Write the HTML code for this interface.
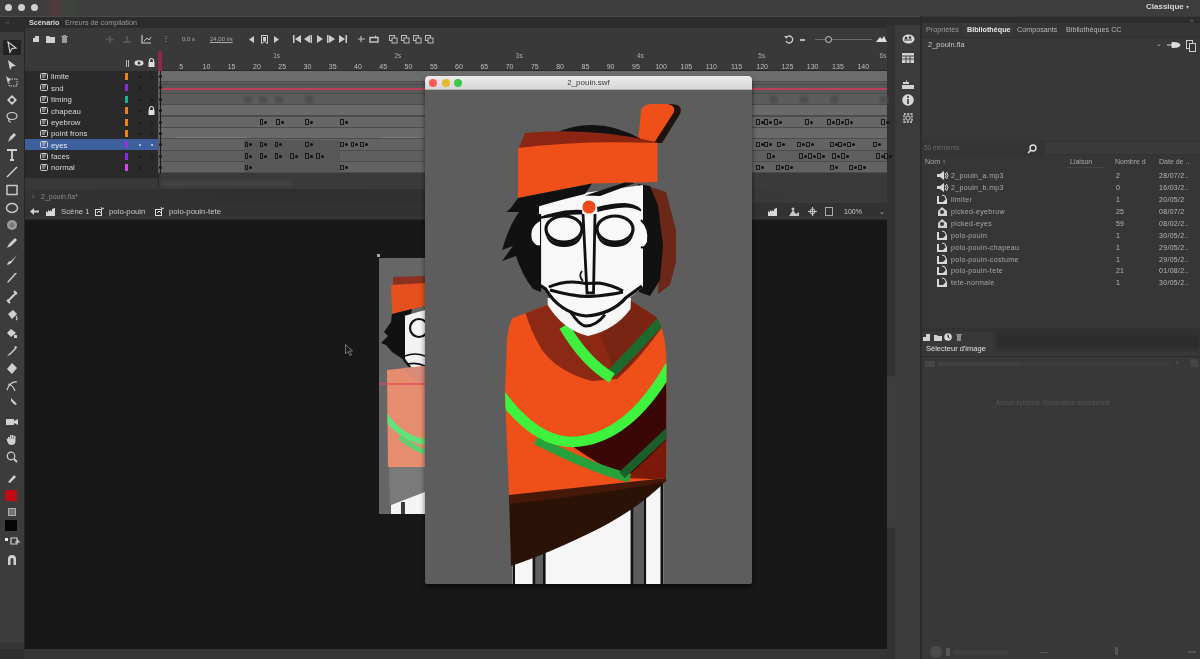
<!DOCTYPE html>
<html><head><meta charset="utf-8">
<style>
*{margin:0;padding:0;box-sizing:border-box}
html,body{width:1200px;height:659px;overflow:hidden;background:#323232;font-family:"Liberation Sans",sans-serif;color:#bbb}
.a{position:absolute}
.t{position:absolute;white-space:nowrap;line-height:1;-webkit-font-smoothing:antialiased}
svg{position:absolute;overflow:visible}
</style></head><body><div id="wrap" style="position:absolute;left:0;top:0;width:1200px;height:659px;overflow:hidden;filter:blur(0.35px)">
<div class="a" style="left:0px;top:0px;width:1200px;height:16px;background:#3d3d3d;"></div>
<div class="a" style="left:0px;top:16px;width:1200px;height:1px;background:#4a4a4a;"></div>
<div class="a" style="left:0px;top:17px;width:1200px;height:642px;background:#2c2c2c;"></div>
<div class="a" style="left:4.5px;top:3.5px;width:7px;height:7px;border-radius:50%;background:#cfcfcf"></div>
<div class="a" style="left:17.5px;top:3.5px;width:7px;height:7px;border-radius:50%;background:#cfcfcf"></div>
<div class="a" style="left:30.5px;top:3.5px;width:7px;height:7px;border-radius:50%;background:#cfcfcf"></div>
<div class="a" style="left:49px;top:0px;width:13px;height:16px;background:#553a40;filter:blur(1.5px);opacity:.9"></div>
<div class="a" style="left:62px;top:0px;width:14px;height:16px;background:#3e463f;filter:blur(1.5px);opacity:.8"></div>
<div class="t" style="left:1146px;top:3px;font-size:8px;color:#d8d8d8;font-weight:bold">Classique</div>
<div class="t" style="left:1186px;top:4px;font-size:6px;color:#bbb;">&#9662;</div>
<div class="t" style="left:29px;top:19px;font-size:7.2px;color:#d6d6d6;font-weight:bold">Scénario</div>
<div class="t" style="left:65px;top:19px;font-size:7.2px;color:#9a9a9a;">Erreurs de compilation</div>
<div class="t" style="left:5px;top:19px;font-size:6px;color:#777;">&#8249;&#8249;</div>
<div class="a" style="left:0px;top:32px;width:24px;height:611px;background:#3c3c3c;"></div>
<div class="a" style="left:0px;top:643px;width:24px;height:16px;background:#363636;"></div>
<div class="a" style="left:24px;top:28px;width:1px;height:631px;background:#262626;"></div>
<div class="a" style="left:25px;top:28px;width:862px;height:43px;background:#393939;"></div>
<div class="a" style="left:25px;top:71px;width:133px;height:107px;background:#2a2a2a;"></div>
<div class="a" style="left:158px;top:71px;width:729px;height:102px;background:#5c5c5c;"></div>
<div class="a" style="left:25px;top:173px;width:862px;height:16px;background:#3a3a3a;"></div>
<div class="a" style="left:25px;top:178px;width:133px;height:11px;background:#383838;"></div>
<div class="a" style="left:25px;top:173px;width:133px;height:5px;background:#2a2a2a;"></div>
<div class="a" style="left:158px;top:173px;width:1px;height:16px;background:#2a2a2a;"></div>
<div class="a" style="left:162px;top:180px;width:130px;height:7px;background:#424242;border-radius:3px;filter:blur(1px)"></div>
<div class="a" style="left:25px;top:189px;width:862px;height:14px;background:linear-gradient(90deg,#333 0%,#2f2f2f 35%,#333 70%,#3a3a3a 90%);"></div>
<div class="a" style="left:25px;top:203px;width:862px;height:15px;background:#323232;"></div>
<div class="a" style="left:25px;top:217px;width:862px;height:1px;background:#3c3c3c;"></div>
<div class="a" style="left:25px;top:220px;width:862px;height:429px;background:#181818;"></div>
<div class="a" style="left:0px;top:649px;width:888px;height:10px;background:#343434;"></div>
<div class="a" style="left:0px;top:649px;width:24px;height:10px;background:#2e2e2e;"></div>
<div class="a" style="left:887px;top:17px;width:33px;height:642px;background:#3b3b3b;"></div>
<div class="a" style="left:887px;top:17px;width:8px;height:642px;background:#323232;"></div>
<div class="a" style="left:887px;top:17px;width:33px;height:8px;background:#2e2e2e;"></div>
<div class="a" style="left:920px;top:16px;width:2px;height:643px;background:#2b2b2b;"></div>
<div class="a" style="left:922px;top:16px;width:278px;height:643px;background:#383838;"></div>
<svg style="left:32px;top:35px" width="9" height="8" viewBox="0 0 9 8"><rect x="1" y="1" width="6" height="6" fill="#d0d0d0"/><rect x="0" y="0" width="3" height="3" fill="#393939"/></svg>
<svg style="left:46px;top:35px" width="9" height="8" viewBox="0 0 9 8"><path d="M0 1h3l1 1h5v6H0z" fill="#cfcfcf"/></svg>
<svg style="left:61px;top:35px" width="7" height="8" viewBox="0 0 7 8"><path d="M1 2h5v6H1z M0 1h7v1H0z M2 0h3v1H2z" fill="#9a9a9a"/></svg>
<svg style="left:106px;top:36px" width="8" height="7" viewBox="0 0 8 7"><path d="M4 0v7M0 3.5h8" stroke="#555" stroke-width="2"/></svg>
<svg style="left:123px;top:36px" width="8" height="7" viewBox="0 0 8 7"><path d="M4 0v6M0 6h8" stroke="#555" stroke-width="2"/></svg>
<svg style="left:141px;top:35px" width="10" height="9" viewBox="0 0 10 9"><path d="M1 0v8h9" stroke="#c8c8c8" stroke-width="1.2" fill="none"/><path d="M3 6l3-3 2 2 2-3" stroke="#c8c8c8" stroke-width="1" fill="none"/></svg>
<div class="a" style="left:126px;top:60px;width:1px;height:7px;background:#bbb;"></div>
<div class="a" style="left:128px;top:60px;width:1px;height:7px;background:#bbb;"></div>
<svg style="left:134px;top:60px" width="10" height="6" viewBox="0 0 10 6"><ellipse cx="5" cy="3" rx="4.5" ry="2.8" fill="#ddd"/><circle cx="5" cy="3" r="1.5" fill="#393939"/></svg>
<svg style="left:148px;top:58px" width="7" height="9" viewBox="0 0 7 9"><path d="M1.5 4V2.5a2 2 0 0 1 4 0V4" stroke="#ddd" stroke-width="1.2" fill="none"/><rect x="0.5" y="4" width="6" height="5" fill="#ddd"/></svg>
<div class="t" style="left:162px;top:35px;font-size:8px;color:#aaa;">&#8942;</div>
<div class="t" style="left:182px;top:36px;font-size:6px;color:#aaa;">0,0 s</div>
<div class="t" style="left:210px;top:36px;font-size:6px;color:#aaa;text-decoration:underline">24,00 i/s</div>
<svg style="left:249px;top:36px" width="5" height="7" viewBox="0 0 5 7"><path d="M5 0L0 3.5 5 7z" fill="#ccc"/></svg>
<svg style="left:261px;top:35px" width="7" height="10" viewBox="0 0 7 10"><path d="M0.5 0.5h6v8l-3-2-3 2z" stroke="#ccc" fill="none"/><rect x="2" y="2" width="3" height="4" fill="#ccc"/></svg>
<svg style="left:274px;top:36px" width="5" height="7" viewBox="0 0 5 7"><path d="M0 0L5 3.5 0 7z" fill="#ccc"/></svg>
<svg style="left:293px;top:35px" width="8" height="8" viewBox="0 0 8 8"><path d="M0 0h1.5v8H0z M8 0L2 4 8 8z" fill="#ccc"/></svg>
<svg style="left:304px;top:35px" width="8" height="8" viewBox="0 0 8 8"><path d="M6 0L0 4 6 8z M6.5 0H8v8H6.5z" fill="#ccc"/></svg>
<svg style="left:317px;top:35px" width="6" height="8" viewBox="0 0 6 8"><path d="M0 0L6 4 0 8z" fill="#ccc"/></svg>
<svg style="left:327px;top:35px" width="8" height="8" viewBox="0 0 8 8"><path d="M0 0h1.5v8H0z M2 0L8 4 2 8z" fill="#ccc"/></svg>
<svg style="left:339px;top:35px" width="8" height="8" viewBox="0 0 8 8"><path d="M0 0L6 4 0 8z M6.5 0H8v8H6.5z" fill="#ccc"/></svg>
<svg style="left:357px;top:35px" width="9" height="8" viewBox="0 0 9 8"><path d="M1 4h7M4 1v6" stroke="#bbb" stroke-width="1.2"/></svg>
<svg style="left:369px;top:35px" width="10" height="8" viewBox="0 0 10 8"><rect x="1" y="2.5" width="8" height="4.5" stroke="#ccc" stroke-width="1.4" fill="none"/><path d="M6 0l2 2.5-2 1z" fill="#ccc"/></svg>
<svg style="left:389px;top:35px" width="9" height="9" viewBox="0 0 9 9"><rect x="0.5" y="0.5" width="5" height="5" stroke="#bbb" fill="none"/><rect x="3" y="3" width="5" height="5" stroke="#bbb" fill="#393939"/></svg>
<svg style="left:401px;top:35px" width="9" height="9" viewBox="0 0 9 9"><rect x="0.5" y="0.5" width="5" height="5" stroke="#bbb" fill="none"/><rect x="3" y="3" width="5" height="5" stroke="#bbb" fill="#393939"/></svg>
<svg style="left:413px;top:35px" width="9" height="9" viewBox="0 0 9 9"><rect x="0.5" y="0.5" width="5" height="5" stroke="#bbb" fill="none"/><rect x="3" y="3" width="5" height="5" stroke="#bbb" fill="#393939"/></svg>
<svg style="left:425px;top:35px" width="9" height="9" viewBox="0 0 9 9"><rect x="0.5" y="0.5" width="5" height="5" stroke="#bbb" fill="none"/><rect x="3" y="3" width="5" height="5" stroke="#bbb" fill="#393939"/></svg>
<svg style="left:784px;top:35px" width="9" height="9" viewBox="0 0 9 9"><path d="M2 3a3.5 3.5 0 1 1 0 3" stroke="#ccc" stroke-width="1.3" fill="none"/><path d="M0 1l3 0 0 3z" fill="#ccc"/></svg>
<div class="a" style="left:800px;top:39px;width:5px;height:1.5px;background:#bbb;"></div>
<div class="a" style="left:815px;top:39px;width:57px;height:1px;background:#6a6a6a;"></div>
<div class="a" style="left:825px;top:36px;width:7px;height:7px;border:1.3px solid #ccc;border-radius:50%;background:#393939"></div>
<svg style="left:876px;top:36px" width="11" height="6" viewBox="0 0 11 6"><path d="M0 6L4 1 6 3 8 0 11 6z" fill="#ddd"/></svg>
<div class="a" style="left:158px;top:50px;width:729px;height:20px;background:#393939;"></div>
<div class="t" style="left:179.2px;top:62.5px;font-size:7px;color:#bdbdbd;">5</div>
<div class="t" style="left:202.5px;top:62.5px;font-size:7px;color:#bdbdbd;">10</div>
<div class="t" style="left:227.7px;top:62.5px;font-size:7px;color:#bdbdbd;">15</div>
<div class="t" style="left:253.0px;top:62.5px;font-size:7px;color:#bdbdbd;">20</div>
<div class="t" style="left:278.3px;top:62.5px;font-size:7px;color:#bdbdbd;">25</div>
<div class="t" style="left:303.5px;top:62.5px;font-size:7px;color:#bdbdbd;">30</div>
<div class="t" style="left:328.8px;top:62.5px;font-size:7px;color:#bdbdbd;">35</div>
<div class="t" style="left:354.1px;top:62.5px;font-size:7px;color:#bdbdbd;">40</div>
<div class="t" style="left:379.3px;top:62.5px;font-size:7px;color:#bdbdbd;">45</div>
<div class="t" style="left:404.6px;top:62.5px;font-size:7px;color:#bdbdbd;">50</div>
<div class="t" style="left:429.9px;top:62.5px;font-size:7px;color:#bdbdbd;">55</div>
<div class="t" style="left:455.1px;top:62.5px;font-size:7px;color:#bdbdbd;">60</div>
<div class="t" style="left:480.4px;top:62.5px;font-size:7px;color:#bdbdbd;">65</div>
<div class="t" style="left:505.7px;top:62.5px;font-size:7px;color:#bdbdbd;">70</div>
<div class="t" style="left:530.9px;top:62.5px;font-size:7px;color:#bdbdbd;">75</div>
<div class="t" style="left:556.2px;top:62.5px;font-size:7px;color:#bdbdbd;">80</div>
<div class="t" style="left:581.5px;top:62.5px;font-size:7px;color:#bdbdbd;">85</div>
<div class="t" style="left:606.7px;top:62.5px;font-size:7px;color:#bdbdbd;">90</div>
<div class="t" style="left:632.0px;top:62.5px;font-size:7px;color:#bdbdbd;">95</div>
<div class="t" style="left:655.2px;top:62.5px;font-size:7px;color:#bdbdbd;">100</div>
<div class="t" style="left:680.5px;top:62.5px;font-size:7px;color:#bdbdbd;">105</div>
<div class="t" style="left:705.8px;top:62.5px;font-size:7px;color:#bdbdbd;">110</div>
<div class="t" style="left:731.0px;top:62.5px;font-size:7px;color:#bdbdbd;">115</div>
<div class="t" style="left:756.3px;top:62.5px;font-size:7px;color:#bdbdbd;">120</div>
<div class="t" style="left:781.6px;top:62.5px;font-size:7px;color:#bdbdbd;">125</div>
<div class="t" style="left:806.8px;top:62.5px;font-size:7px;color:#bdbdbd;">130</div>
<div class="t" style="left:832.1px;top:62.5px;font-size:7px;color:#bdbdbd;">135</div>
<div class="t" style="left:857.4px;top:62.5px;font-size:7px;color:#bdbdbd;">140</div>
<div class="t" style="left:273.2px;top:52.5px;font-size:6.5px;color:#aaa;">1s</div>
<div class="t" style="left:394.5px;top:52.5px;font-size:6.5px;color:#aaa;">2s</div>
<div class="t" style="left:515.8px;top:52.5px;font-size:6.5px;color:#aaa;">3s</div>
<div class="t" style="left:637.0px;top:52.5px;font-size:6.5px;color:#aaa;">4s</div>
<div class="t" style="left:758.3px;top:52.5px;font-size:6.5px;color:#aaa;">5s</div>
<div class="t" style="left:879.6px;top:52.5px;font-size:6.5px;color:#aaa;">6s</div>
<div class="a" style="left:158px;top:70px;width:729px;height:1px;background:#2a2a2a;"></div>
<svg style="left:40px;top:73.0px" width="8" height="7" viewBox="0 0 8 7"><rect x="0.5" y="0.5" width="7" height="6" stroke="#cfcfcf" fill="none" rx="1"/><path d="M2 2h4M2 4h3" stroke="#cfcfcf"/></svg>
<div class="t" style="left:51px;top:73.3px;font-size:7.8px;color:#d8d8d8;">limite</div>
<div class="a" style="left:125px;top:73.0px;width:3px;height:7px;background:#f08020;"></div>
<div class="a" style="left:139px;top:76.0px;width:2px;height:2px;background:#151515;border-radius:50%"></div>
<div class="a" style="left:151px;top:76.0px;width:2px;height:2px;background:#151515;border-radius:50%"></div>
<svg style="left:40px;top:84.4px" width="8" height="7" viewBox="0 0 8 7"><rect x="0.5" y="0.5" width="7" height="6" stroke="#cfcfcf" fill="none" rx="1"/><path d="M2 2h4M2 4h3" stroke="#cfcfcf"/></svg>
<div class="t" style="left:51px;top:84.7px;font-size:7.8px;color:#d8d8d8;">snd</div>
<div class="a" style="left:125px;top:84.4px;width:3px;height:7px;background:#8a2be2;"></div>
<div class="a" style="left:139px;top:87.4px;width:2px;height:2px;background:#151515;border-radius:50%"></div>
<div class="a" style="left:151px;top:87.4px;width:2px;height:2px;background:#151515;border-radius:50%"></div>
<svg style="left:40px;top:95.8px" width="8" height="7" viewBox="0 0 8 7"><rect x="0.5" y="0.5" width="7" height="6" stroke="#cfcfcf" fill="none" rx="1"/><path d="M2 2h4M2 4h3" stroke="#cfcfcf"/></svg>
<div class="t" style="left:51px;top:96.1px;font-size:7.8px;color:#d8d8d8;">timing</div>
<div class="a" style="left:125px;top:95.8px;width:3px;height:7px;background:#20b090;"></div>
<div class="a" style="left:139px;top:98.8px;width:2px;height:2px;background:#151515;border-radius:50%"></div>
<div class="a" style="left:151px;top:98.8px;width:2px;height:2px;background:#151515;border-radius:50%"></div>
<svg style="left:40px;top:107.2px" width="8" height="7" viewBox="0 0 8 7"><rect x="0.5" y="0.5" width="7" height="6" stroke="#cfcfcf" fill="none" rx="1"/><path d="M2 2h4M2 4h3" stroke="#cfcfcf"/></svg>
<div class="t" style="left:51px;top:107.5px;font-size:7.8px;color:#d8d8d8;">chapeau</div>
<div class="a" style="left:125px;top:107.2px;width:3px;height:7px;background:#f08020;"></div>
<div class="a" style="left:139px;top:110.2px;width:2px;height:2px;background:#151515;border-radius:50%"></div>
<svg style="left:148px;top:106.2px" width="7" height="9" viewBox="0 0 7 9"><path d="M1.5 4V2.5a2 2 0 0 1 4 0V4" stroke="#ddd" stroke-width="1.2" fill="none"/><rect x="0.5" y="4" width="6" height="5" fill="#ddd"/></svg>
<svg style="left:40px;top:118.6px" width="8" height="7" viewBox="0 0 8 7"><rect x="0.5" y="0.5" width="7" height="6" stroke="#cfcfcf" fill="none" rx="1"/><path d="M2 2h4M2 4h3" stroke="#cfcfcf"/></svg>
<div class="t" style="left:51px;top:118.9px;font-size:7.8px;color:#d8d8d8;">eyebrow</div>
<div class="a" style="left:125px;top:118.6px;width:3px;height:7px;background:#f08020;"></div>
<div class="a" style="left:139px;top:121.6px;width:2px;height:2px;background:#151515;border-radius:50%"></div>
<div class="a" style="left:151px;top:121.6px;width:2px;height:2px;background:#151515;border-radius:50%"></div>
<svg style="left:40px;top:129.9px" width="8" height="7" viewBox="0 0 8 7"><rect x="0.5" y="0.5" width="7" height="6" stroke="#cfcfcf" fill="none" rx="1"/><path d="M2 2h4M2 4h3" stroke="#cfcfcf"/></svg>
<div class="t" style="left:51px;top:130.2px;font-size:7.8px;color:#d8d8d8;">point frons</div>
<div class="a" style="left:125px;top:129.9px;width:3px;height:7px;background:#f08020;"></div>
<div class="a" style="left:139px;top:132.9px;width:2px;height:2px;background:#151515;border-radius:50%"></div>
<div class="a" style="left:151px;top:132.9px;width:2px;height:2px;background:#151515;border-radius:50%"></div>
<div class="a" style="left:25px;top:139.3px;width:133px;height:11px;background:#3d5f9e;"></div>
<svg style="left:40px;top:141.3px" width="8" height="7" viewBox="0 0 8 7"><rect x="0.5" y="0.5" width="7" height="6" stroke="#cfcfcf" fill="none" rx="1"/><path d="M2 2h4M2 4h3" stroke="#cfcfcf"/></svg>
<div class="t" style="left:51px;top:141.6px;font-size:7.8px;color:#e8e8e8;">eyes</div>
<div class="a" style="left:125px;top:141.3px;width:3px;height:7px;background:#9a30e0;"></div>
<div class="a" style="left:139px;top:144.3px;width:2px;height:2px;background:#ddd;border-radius:50%"></div>
<div class="a" style="left:151px;top:144.3px;width:2px;height:2px;background:#ddd;border-radius:50%"></div>
<svg style="left:40px;top:152.7px" width="8" height="7" viewBox="0 0 8 7"><rect x="0.5" y="0.5" width="7" height="6" stroke="#cfcfcf" fill="none" rx="1"/><path d="M2 2h4M2 4h3" stroke="#cfcfcf"/></svg>
<div class="t" style="left:51px;top:153.0px;font-size:7.8px;color:#d8d8d8;">faces</div>
<div class="a" style="left:125px;top:152.7px;width:3px;height:7px;background:#8a2be2;"></div>
<div class="a" style="left:139px;top:155.7px;width:2px;height:2px;background:#151515;border-radius:50%"></div>
<div class="a" style="left:151px;top:155.7px;width:2px;height:2px;background:#151515;border-radius:50%"></div>
<svg style="left:40px;top:164.1px" width="8" height="7" viewBox="0 0 8 7"><rect x="0.5" y="0.5" width="7" height="6" stroke="#cfcfcf" fill="none" rx="1"/><path d="M2 2h4M2 4h3" stroke="#cfcfcf"/></svg>
<div class="t" style="left:51px;top:164.4px;font-size:7.8px;color:#d8d8d8;">normal</div>
<div class="a" style="left:125px;top:164.1px;width:3px;height:7px;background:#e040f0;"></div>
<div class="a" style="left:139px;top:167.1px;width:2px;height:2px;background:#151515;border-radius:50%"></div>
<div class="a" style="left:151px;top:167.1px;width:2px;height:2px;background:#151515;border-radius:50%"></div>
<div class="a" style="left:159px;top:71.0px;width:728px;height:11.39px;background:#6c6c6c;"></div>
<div class="a" style="left:159px;top:81.2px;width:728px;height:1.2px;background:#4c4c4c;"></div>
<div class="a" style="left:159px;top:82.4px;width:728px;height:11.39px;background:#585858;"></div>
<div class="a" style="left:159px;top:92.6px;width:728px;height:1.2px;background:#4c4c4c;"></div>
<div class="a" style="left:159px;top:93.8px;width:728px;height:11.39px;background:#5c5c5c;"></div>
<div class="a" style="left:159px;top:104.0px;width:728px;height:1.2px;background:#4c4c4c;"></div>
<div class="a" style="left:159px;top:105.2px;width:728px;height:11.39px;background:#6a6a6a;"></div>
<div class="a" style="left:159px;top:115.4px;width:728px;height:1.2px;background:#4c4c4c;"></div>
<div class="a" style="left:159px;top:116.6px;width:728px;height:11.39px;background:#666666;"></div>
<div class="a" style="left:159px;top:126.8px;width:728px;height:1.2px;background:#4c4c4c;"></div>
<div class="a" style="left:159px;top:128.0px;width:728px;height:11.39px;background:#6a6a6a;"></div>
<div class="a" style="left:159px;top:138.1px;width:728px;height:1.2px;background:#4c4c4c;"></div>
<div class="a" style="left:159px;top:139.3px;width:728px;height:11.39px;background:#636363;"></div>
<div class="a" style="left:159px;top:149.5px;width:728px;height:1.2px;background:#4c4c4c;"></div>
<div class="a" style="left:159px;top:150.7px;width:728px;height:11.39px;background:#5f5f5f;"></div>
<div class="a" style="left:159px;top:160.9px;width:728px;height:1.2px;background:#4c4c4c;"></div>
<div class="a" style="left:159px;top:162.1px;width:728px;height:11.39px;background:#626262;"></div>
<div class="a" style="left:159px;top:172.3px;width:728px;height:1.2px;background:#4c4c4c;"></div>
<div class="a" style="left:244px;top:140px;width:96px;height:32px;background:#585858;"></div>
<div class="a" style="left:175px;top:137px;width:72px;height:1px;background:#7a7a7a;"></div>
<div class="a" style="left:381px;top:137px;width:40px;height:1px;background:#7a7a7a;"></div>
<div class="a" style="left:160px;top:87.6px;width:727px;height:2px;background:#b8405a;"></div>
<div class="a" style="left:160px;top:83.5px;width:727px;height:1px;background:#4a4a4a;"></div>
<div class="a" style="left:259.7px;top:119.1px;width:3.5px;height:5.5px;background:none;border:1px solid #1a1a1a"></div>
<div class="a" style="left:264.2px;top:120.6px;width:3px;height:3px;background:#111;border-radius:50%"></div>
<div class="a" style="left:276px;top:119.1px;width:3.5px;height:5.5px;background:none;border:1px solid #1a1a1a"></div>
<div class="a" style="left:280.5px;top:120.6px;width:3px;height:3px;background:#111;border-radius:50%"></div>
<div class="a" style="left:305px;top:119.1px;width:3.5px;height:5.5px;background:none;border:1px solid #1a1a1a"></div>
<div class="a" style="left:309.5px;top:120.6px;width:3px;height:3px;background:#111;border-radius:50%"></div>
<div class="a" style="left:340px;top:119.1px;width:3.5px;height:5.5px;background:none;border:1px solid #1a1a1a"></div>
<div class="a" style="left:344.5px;top:120.6px;width:3px;height:3px;background:#111;border-radius:50%"></div>
<div class="a" style="left:756px;top:119.1px;width:3.5px;height:5.5px;background:none;border:1px solid #1a1a1a"></div>
<div class="a" style="left:760.5px;top:120.6px;width:3px;height:3px;background:#111;border-radius:50%"></div>
<div class="a" style="left:764px;top:119.1px;width:3.5px;height:5.5px;background:none;border:1px solid #1a1a1a"></div>
<div class="a" style="left:768.5px;top:120.6px;width:3px;height:3px;background:#111;border-radius:50%"></div>
<div class="a" style="left:774px;top:119.1px;width:3.5px;height:5.5px;background:none;border:1px solid #1a1a1a"></div>
<div class="a" style="left:778.5px;top:120.6px;width:3px;height:3px;background:#111;border-radius:50%"></div>
<div class="a" style="left:805px;top:119.1px;width:3.5px;height:5.5px;background:none;border:1px solid #1a1a1a"></div>
<div class="a" style="left:809.5px;top:120.6px;width:3px;height:3px;background:#111;border-radius:50%"></div>
<div class="a" style="left:827px;top:119.1px;width:3.5px;height:5.5px;background:none;border:1px solid #1a1a1a"></div>
<div class="a" style="left:831.5px;top:120.6px;width:3px;height:3px;background:#111;border-radius:50%"></div>
<div class="a" style="left:836px;top:119.1px;width:3.5px;height:5.5px;background:none;border:1px solid #1a1a1a"></div>
<div class="a" style="left:840.5px;top:120.6px;width:3px;height:3px;background:#111;border-radius:50%"></div>
<div class="a" style="left:845px;top:119.1px;width:3.5px;height:5.5px;background:none;border:1px solid #1a1a1a"></div>
<div class="a" style="left:849.5px;top:120.6px;width:3px;height:3px;background:#111;border-radius:50%"></div>
<div class="a" style="left:881px;top:119.1px;width:3.5px;height:5.5px;background:none;border:1px solid #1a1a1a"></div>
<div class="a" style="left:885.5px;top:120.6px;width:3px;height:3px;background:#111;border-radius:50%"></div>
<div class="a" style="left:244.5px;top:141.8px;width:3.5px;height:5.5px;background:none;border:1px solid #1a1a1a"></div>
<div class="a" style="left:249.0px;top:143.3px;width:3px;height:3px;background:#111;border-radius:50%"></div>
<div class="a" style="left:259.7px;top:141.8px;width:3.5px;height:5.5px;background:none;border:1px solid #1a1a1a"></div>
<div class="a" style="left:264.2px;top:143.3px;width:3px;height:3px;background:#111;border-radius:50%"></div>
<div class="a" style="left:274.8px;top:141.8px;width:3.5px;height:5.5px;background:none;border:1px solid #1a1a1a"></div>
<div class="a" style="left:279.3px;top:143.3px;width:3px;height:3px;background:#111;border-radius:50%"></div>
<div class="a" style="left:305px;top:141.8px;width:3.5px;height:5.5px;background:none;border:1px solid #1a1a1a"></div>
<div class="a" style="left:309.5px;top:143.3px;width:3px;height:3px;background:#111;border-radius:50%"></div>
<div class="a" style="left:340px;top:141.8px;width:3.5px;height:5.5px;background:none;border:1px solid #1a1a1a"></div>
<div class="a" style="left:344.5px;top:143.3px;width:3px;height:3px;background:#111;border-radius:50%"></div>
<div class="a" style="left:350.7px;top:141.8px;width:3.5px;height:5.5px;background:none;border:1px solid #1a1a1a"></div>
<div class="a" style="left:355.2px;top:143.3px;width:3px;height:3px;background:#111;border-radius:50%"></div>
<div class="a" style="left:360.4px;top:141.8px;width:3.5px;height:5.5px;background:none;border:1px solid #1a1a1a"></div>
<div class="a" style="left:364.9px;top:143.3px;width:3px;height:3px;background:#111;border-radius:50%"></div>
<div class="a" style="left:756px;top:141.8px;width:3.5px;height:5.5px;background:none;border:1px solid #1a1a1a"></div>
<div class="a" style="left:760.5px;top:143.3px;width:3px;height:3px;background:#111;border-radius:50%"></div>
<div class="a" style="left:764px;top:141.8px;width:3.5px;height:5.5px;background:none;border:1px solid #1a1a1a"></div>
<div class="a" style="left:768.5px;top:143.3px;width:3px;height:3px;background:#111;border-radius:50%"></div>
<div class="a" style="left:777px;top:141.8px;width:3.5px;height:5.5px;background:none;border:1px solid #1a1a1a"></div>
<div class="a" style="left:781.5px;top:143.3px;width:3px;height:3px;background:#111;border-radius:50%"></div>
<div class="a" style="left:797px;top:141.8px;width:3.5px;height:5.5px;background:none;border:1px solid #1a1a1a"></div>
<div class="a" style="left:801.5px;top:143.3px;width:3px;height:3px;background:#111;border-radius:50%"></div>
<div class="a" style="left:806px;top:141.8px;width:3.5px;height:5.5px;background:none;border:1px solid #1a1a1a"></div>
<div class="a" style="left:810.5px;top:143.3px;width:3px;height:3px;background:#111;border-radius:50%"></div>
<div class="a" style="left:830px;top:141.8px;width:3.5px;height:5.5px;background:none;border:1px solid #1a1a1a"></div>
<div class="a" style="left:834.5px;top:143.3px;width:3px;height:3px;background:#111;border-radius:50%"></div>
<div class="a" style="left:838px;top:141.8px;width:3.5px;height:5.5px;background:none;border:1px solid #1a1a1a"></div>
<div class="a" style="left:842.5px;top:143.3px;width:3px;height:3px;background:#111;border-radius:50%"></div>
<div class="a" style="left:847px;top:141.8px;width:3.5px;height:5.5px;background:none;border:1px solid #1a1a1a"></div>
<div class="a" style="left:851.5px;top:143.3px;width:3px;height:3px;background:#111;border-radius:50%"></div>
<div class="a" style="left:873px;top:141.8px;width:3.5px;height:5.5px;background:none;border:1px solid #1a1a1a"></div>
<div class="a" style="left:877.5px;top:143.3px;width:3px;height:3px;background:#111;border-radius:50%"></div>
<div class="a" style="left:244.5px;top:153.2px;width:3.5px;height:5.5px;background:none;border:1px solid #1a1a1a"></div>
<div class="a" style="left:249.0px;top:154.7px;width:3px;height:3px;background:#111;border-radius:50%"></div>
<div class="a" style="left:259.7px;top:153.2px;width:3.5px;height:5.5px;background:none;border:1px solid #1a1a1a"></div>
<div class="a" style="left:264.2px;top:154.7px;width:3px;height:3px;background:#111;border-radius:50%"></div>
<div class="a" style="left:274.8px;top:153.2px;width:3.5px;height:5.5px;background:none;border:1px solid #1a1a1a"></div>
<div class="a" style="left:279.3px;top:154.7px;width:3px;height:3px;background:#111;border-radius:50%"></div>
<div class="a" style="left:290px;top:153.2px;width:3.5px;height:5.5px;background:none;border:1px solid #1a1a1a"></div>
<div class="a" style="left:294.5px;top:154.7px;width:3px;height:3px;background:#111;border-radius:50%"></div>
<div class="a" style="left:305px;top:153.2px;width:3.5px;height:5.5px;background:none;border:1px solid #1a1a1a"></div>
<div class="a" style="left:309.5px;top:154.7px;width:3px;height:3px;background:#111;border-radius:50%"></div>
<div class="a" style="left:316px;top:153.2px;width:3.5px;height:5.5px;background:none;border:1px solid #1a1a1a"></div>
<div class="a" style="left:320.5px;top:154.7px;width:3px;height:3px;background:#111;border-radius:50%"></div>
<div class="a" style="left:767px;top:153.2px;width:3.5px;height:5.5px;background:none;border:1px solid #1a1a1a"></div>
<div class="a" style="left:771.5px;top:154.7px;width:3px;height:3px;background:#111;border-radius:50%"></div>
<div class="a" style="left:799px;top:153.2px;width:3.5px;height:5.5px;background:none;border:1px solid #1a1a1a"></div>
<div class="a" style="left:803.5px;top:154.7px;width:3px;height:3px;background:#111;border-radius:50%"></div>
<div class="a" style="left:808px;top:153.2px;width:3.5px;height:5.5px;background:none;border:1px solid #1a1a1a"></div>
<div class="a" style="left:812.5px;top:154.7px;width:3px;height:3px;background:#111;border-radius:50%"></div>
<div class="a" style="left:817px;top:153.2px;width:3.5px;height:5.5px;background:none;border:1px solid #1a1a1a"></div>
<div class="a" style="left:821.5px;top:154.7px;width:3px;height:3px;background:#111;border-radius:50%"></div>
<div class="a" style="left:832px;top:153.2px;width:3.5px;height:5.5px;background:none;border:1px solid #1a1a1a"></div>
<div class="a" style="left:836.5px;top:154.7px;width:3px;height:3px;background:#111;border-radius:50%"></div>
<div class="a" style="left:841px;top:153.2px;width:3.5px;height:5.5px;background:none;border:1px solid #1a1a1a"></div>
<div class="a" style="left:845.5px;top:154.7px;width:3px;height:3px;background:#111;border-radius:50%"></div>
<div class="a" style="left:876px;top:153.2px;width:3.5px;height:5.5px;background:none;border:1px solid #1a1a1a"></div>
<div class="a" style="left:880.5px;top:154.7px;width:3px;height:3px;background:#111;border-radius:50%"></div>
<div class="a" style="left:884px;top:153.2px;width:3.5px;height:5.5px;background:none;border:1px solid #1a1a1a"></div>
<div class="a" style="left:888.5px;top:154.7px;width:3px;height:3px;background:#111;border-radius:50%"></div>
<div class="a" style="left:244.5px;top:164.6px;width:3.5px;height:5.5px;background:none;border:1px solid #1a1a1a"></div>
<div class="a" style="left:249.0px;top:166.1px;width:3px;height:3px;background:#111;border-radius:50%"></div>
<div class="a" style="left:340px;top:164.6px;width:3.5px;height:5.5px;background:none;border:1px solid #1a1a1a"></div>
<div class="a" style="left:344.5px;top:166.1px;width:3px;height:3px;background:#111;border-radius:50%"></div>
<div class="a" style="left:756px;top:164.6px;width:3.5px;height:5.5px;background:none;border:1px solid #1a1a1a"></div>
<div class="a" style="left:760.5px;top:166.1px;width:3px;height:3px;background:#111;border-radius:50%"></div>
<div class="a" style="left:776px;top:164.6px;width:3.5px;height:5.5px;background:none;border:1px solid #1a1a1a"></div>
<div class="a" style="left:780.5px;top:166.1px;width:3px;height:3px;background:#111;border-radius:50%"></div>
<div class="a" style="left:785px;top:164.6px;width:3.5px;height:5.5px;background:none;border:1px solid #1a1a1a"></div>
<div class="a" style="left:789.5px;top:166.1px;width:3px;height:3px;background:#111;border-radius:50%"></div>
<div class="a" style="left:830px;top:164.6px;width:3.5px;height:5.5px;background:none;border:1px solid #1a1a1a"></div>
<div class="a" style="left:834.5px;top:166.1px;width:3px;height:3px;background:#111;border-radius:50%"></div>
<div class="a" style="left:849px;top:164.6px;width:3.5px;height:5.5px;background:none;border:1px solid #1a1a1a"></div>
<div class="a" style="left:853.5px;top:166.1px;width:3px;height:3px;background:#111;border-radius:50%"></div>
<div class="a" style="left:858px;top:164.6px;width:3.5px;height:5.5px;background:none;border:1px solid #1a1a1a"></div>
<div class="a" style="left:862.5px;top:166.1px;width:3px;height:3px;background:#111;border-radius:50%"></div>
<div class="a" style="left:159px;top:75.0px;width:3px;height:3px;background:#111;border-radius:50%"></div>
<div class="a" style="left:159px;top:86.4px;width:3px;height:3px;background:#111;border-radius:50%"></div>
<div class="a" style="left:159px;top:97.8px;width:3px;height:3px;background:#111;border-radius:50%"></div>
<div class="a" style="left:159px;top:109.2px;width:3px;height:3px;background:#111;border-radius:50%"></div>
<div class="a" style="left:159px;top:120.6px;width:3px;height:3px;background:#111;border-radius:50%"></div>
<div class="a" style="left:159px;top:131.9px;width:3px;height:3px;background:#111;border-radius:50%"></div>
<div class="a" style="left:159px;top:143.3px;width:3px;height:3px;background:#111;border-radius:50%"></div>
<div class="a" style="left:159px;top:154.7px;width:3px;height:3px;background:#111;border-radius:50%"></div>
<div class="a" style="left:159px;top:166.1px;width:3px;height:3px;background:#111;border-radius:50%"></div>
<div class="a" style="left:244px;top:96px;width:8px;height:7px;background:#4e4e4e;filter:blur(1px)"></div>
<div class="a" style="left:259px;top:96px;width:8px;height:7px;background:#4e4e4e;filter:blur(1px)"></div>
<div class="a" style="left:275px;top:96px;width:8px;height:7px;background:#4e4e4e;filter:blur(1px)"></div>
<div class="a" style="left:305px;top:96px;width:8px;height:7px;background:#4e4e4e;filter:blur(1px)"></div>
<div class="a" style="left:770px;top:96px;width:8px;height:7px;background:#4e4e4e;filter:blur(1px)"></div>
<div class="a" style="left:800px;top:96px;width:8px;height:7px;background:#4e4e4e;filter:blur(1px)"></div>
<div class="a" style="left:830px;top:96px;width:8px;height:7px;background:#4e4e4e;filter:blur(1px)"></div>
<div class="a" style="left:880px;top:96px;width:8px;height:7px;background:#4e4e4e;filter:blur(1px)"></div>
<div class="a" style="left:158px;top:51px;width:4px;height:20px;background:#8c2a42;"></div>
<div class="a" style="left:160px;top:71px;width:1px;height:103px;background:#1a1a1a;"></div>
<div class="a" style="left:3px;top:40px;width:18px;height:15px;background:#232323;"></div>
<svg style="left:6px;top:41px" width="12" height="12" viewBox="0 0 12 12"><path d="M2 1L10 7 6 7.5 4 11z" stroke="#d0d0d0" fill="none" stroke-width="1.2"/></svg>
<svg style="left:6px;top:59px" width="12" height="12" viewBox="0 0 12 12"><path d="M2 1L10 7 6 7.5 4 11z" fill="#d0d0d0"/></svg>
<svg style="left:6px;top:76px" width="12" height="12" viewBox="0 0 12 12"><rect x="3" y="3" width="8" height="7" stroke="#d0d0d0" stroke-dasharray="1.5 1" fill="none"/><path d="M0 0l5 4-2 .5-1 3z" fill="#d0d0d0"/></svg>
<svg style="left:6px;top:94px" width="12" height="12" viewBox="0 0 12 12"><path d="M6 1L11 6 6 11 1 6z" fill="#d0d0d0"/><circle cx="6" cy="6" r="2" fill="#393939"/></svg>
<svg style="left:6px;top:111px" width="12" height="12" viewBox="0 0 12 12"><ellipse cx="6" cy="5" rx="5" ry="3.5" stroke="#d0d0d0" fill="none" stroke-width="1.2"/><path d="M3 8q-1 3 2 3" stroke="#d0d0d0" fill="none" stroke-width="1.2"/></svg>
<svg style="left:6px;top:131px" width="12" height="12" viewBox="0 0 12 12"><path d="M2 11L4 6 8 2 10 4 6 8z" fill="#d0d0d0"/></svg>
<svg style="left:6px;top:149px" width="12" height="12" viewBox="0 0 12 12"><path d="M1 1h10M6 1v10M4 11h4" stroke="#d0d0d0" stroke-width="1.8" fill="none"/></svg>
<svg style="left:6px;top:166px" width="12" height="12" viewBox="0 0 12 12"><path d="M1 11L11 1" stroke="#d0d0d0" stroke-width="1.5"/></svg>
<svg style="left:6px;top:184px" width="12" height="12" viewBox="0 0 12 12"><rect x="1" y="1.5" width="10" height="9" stroke="#c8c8c8" stroke-width="1.5" fill="none"/></svg>
<svg style="left:6px;top:202px" width="12" height="12" viewBox="0 0 12 12"><ellipse cx="6" cy="6" rx="5.5" ry="4.5" stroke="#c8c8c8" stroke-width="1.5" fill="none"/></svg>
<svg style="left:6px;top:219px" width="12" height="12" viewBox="0 0 12 12"><circle cx="6" cy="6" r="5" fill="#9a9a9a"/><circle cx="6" cy="6" r="2.5" fill="#777"/></svg>
<svg style="left:6px;top:237px" width="12" height="12" viewBox="0 0 12 12"><path d="M1 11L3 7 9 1 11 3 5 9z" fill="#d0d0d0"/></svg>
<svg style="left:6px;top:254px" width="12" height="12" viewBox="0 0 12 12"><path d="M1 11q1-4 4-4l6-6-5 7q-2 3-5 3z" fill="#d0d0d0"/></svg>
<svg style="left:6px;top:272px" width="12" height="12" viewBox="0 0 12 12"><path d="M1 11l2-1 8-9-2 0-7 8z" fill="#d0d0d0"/></svg>
<svg style="left:6px;top:291px" width="12" height="12" viewBox="0 0 12 12"><path d="M2 10L10 2M1 9l3 3M8 0l3 3" stroke="#d0d0d0" stroke-width="2"/></svg>
<svg style="left:6px;top:309px" width="12" height="12" viewBox="0 0 12 12"><path d="M2 5l5-4 4 4-5 5z" fill="#d0d0d0"/><path d="M10 7q2 3 0 4" stroke="#d0d0d0" fill="none" stroke-width="1.2"/></svg>
<svg style="left:6px;top:327px" width="12" height="12" viewBox="0 0 12 12"><path d="M1 6l4-4 5 4-5 4z" fill="#d0d0d0"/><path d="M8 8h3v3H8z" fill="#d0d0d0"/></svg>
<svg style="left:6px;top:345px" width="12" height="12" viewBox="0 0 12 12"><path d="M1 11l2-2 6-6 1 1-6 6z M8 2l2-1 1 1-1 2z" fill="#d0d0d0"/></svg>
<svg style="left:6px;top:362px" width="12" height="12" viewBox="0 0 12 12"><path d="M1 7l5-6 5 5-5 6z" fill="#d0d0d0"/></svg>
<svg style="left:6px;top:380px" width="12" height="12" viewBox="0 0 12 12"><path d="M1 10q3-9 10-8M2 4q5 1 7 7" stroke="#d0d0d0" fill="none" stroke-width="1.2"/></svg>
<svg style="left:6px;top:397px" width="12" height="12" viewBox="0 0 12 12"><path d="M3 11l3-4M5 1l6 6-2 1-4-4z" fill="#d0d0d0"/></svg>
<svg style="left:6px;top:416px" width="12" height="12" viewBox="0 0 12 12"><rect x="0" y="3" width="8" height="6" fill="#d0d0d0"/><path d="M8 5l4-2v6l-4-2z" fill="#d0d0d0"/></svg>
<svg style="left:6px;top:434px" width="12" height="12" viewBox="0 0 12 12"><path d="M2 6v-3h1.5v3M4 5v-4h1.5v4M6 5v-4h1.5v4M8 5v-3h1.5v5q0 4-4 4-3 0-4-3l-1-3 1-.5z" fill="#d0d0d0"/></svg>
<svg style="left:6px;top:451px" width="12" height="12" viewBox="0 0 12 12"><circle cx="5" cy="5" r="3.8" stroke="#d0d0d0" fill="none" stroke-width="1.2"/><path d="M8 8l3 3" stroke="#d0d0d0" stroke-width="1.8"/></svg>
<svg style="left:6px;top:472px" width="12" height="12" viewBox="0 0 12 12"><path d="M2 10L8 3 10 5 4 11z" fill="#d0d0d0"/></svg>
<div class="a" style="left:5px;top:490px;width:12px;height:11px;background:#c10a14;"></div>
<svg style="left:6px;top:505px" width="12" height="12" viewBox="0 0 12 12"><path d="M2 3h8v8H2z" fill="#aaa"/><path d="M3 4h6v6H3z" fill="#777"/></svg>
<div class="a" style="left:5px;top:520px;width:12px;height:11px;background:#050505;"></div>
<div class="a" style="left:5px;top:538px;width:3px;height:3px;background:#eee;"></div>
<svg style="left:9px;top:536px" width="12" height="12" viewBox="0 0 12 12"><path d="M2 2h6v6H2z" stroke="#d0d0d0" fill="none" stroke-width="1.2"/><path d="M6 6l4 0-2-2" stroke="#d0d0d0" fill="none" stroke-width="1.2"/></svg>
<svg style="left:6px;top:554px" width="12" height="12" viewBox="0 0 12 12"><path d="M2 11V5a4 4 0 0 1 8 0v6h-2.5V5.5a1.5 1.5 0 0 0-3 0V11z" fill="#d0d0d0"/></svg>
<div class="t" style="left:32px;top:193px;font-size:7px;color:#777;">&#8249;</div>
<div class="t" style="left:41px;top:193px;font-size:7px;color:#8a8a8a;">2_pouin.fla*</div>
<svg style="left:30px;top:208px" width="9" height="7" viewBox="0 0 9 7"><path d="M0 3.5L4 0v2.5h5v2H4V7z" fill="#d0d0d0"/></svg>
<svg style="left:46px;top:208px" width="9" height="8" viewBox="0 0 9 8"><path d="M0 8V3l2 1.5V2l2 1.5V2l2 1.5V1l3-1v8z" fill="#d8d8d8"/></svg>
<div class="t" style="left:61px;top:208px;font-size:7.8px;color:#c8c8c8;">Scène 1</div>
<svg style="left:95px;top:207px" width="9" height="9" viewBox="0 0 9 9"><rect x="0.5" y="2.5" width="6" height="6" stroke="#d8d8d8" fill="none"/><path d="M2 6l2-2 2 2M6 0l1 2 2-1" stroke="#d8d8d8" fill="none"/></svg>
<div class="t" style="left:109px;top:208px;font-size:7.8px;color:#c8c8c8;">polo-pouin</div>
<svg style="left:155px;top:207px" width="9" height="9" viewBox="0 0 9 9"><rect x="0.5" y="2.5" width="6" height="6" stroke="#d8d8d8" fill="none"/><path d="M2 6l2-2 2 2M6 0l1 2 2-1" stroke="#d8d8d8" fill="none"/></svg>
<div class="t" style="left:169px;top:208px;font-size:7.8px;color:#c8c8c8;">polo-pouin-tete</div>
<svg style="left:768px;top:208px" width="10" height="8" viewBox="0 0 10 8"><path d="M0 8V3l2 1.5V2l2 1.5V2l2 1.5V1l3-1v8z" fill="#d8d8d8"/></svg>
<svg style="left:788px;top:207px" width="12" height="10" viewBox="0 0 12 10"><path d="M1 9l4-6 3 4 3-2v4z" fill="#c8c8c8"/><circle cx="5" cy="2" r="1.5" fill="#c8c8c8"/></svg>
<svg style="left:808px;top:207px" width="9" height="9" viewBox="0 0 9 9"><path d="M4.5 0v9M0 4.5h9" stroke="#c8c8c8" stroke-width="1.2"/><circle cx="4.5" cy="4.5" r="2.5" stroke="#c8c8c8" fill="none"/></svg>
<svg style="left:825px;top:207px" width="8" height="9" viewBox="0 0 8 9"><rect x="0.5" y="0.5" width="7" height="8" stroke="#aaa" fill="none"/></svg>
<div class="t" style="left:844px;top:208px;font-size:7px;color:#c8c8c8;">100%</div>
<div class="t" style="left:879px;top:208px;font-size:7px;color:#bbb;">&#8964;</div>
<div class="a" style="left:887px;top:376px;width:8px;height:152px;background:#3d3d3d;border-radius:1px"></div>
<svg style="left:0;top:0" width="1200" height="659" viewBox="0 0 1200 659">
<rect x="379" y="258" width="50" height="256" fill="#666"/>
<rect x="377" y="254" width="3" height="3" fill="#aaa"/>
<path d="M393,277 L425,276 L425,287 L393,288Z" fill="#8a3020"/>
<path d="M391,285 L425,283 L425,306 L392,314Z" fill="#e4501e"/>
<path d="M392,314 L412,309 L410,320 L403,330 L404,360 L392,352 L386,345 L381,343 L388,336 L384,332 L391,322Z" fill="#111"/>
<path d="M404,316 L425,310 L425,378 L414,372 L405,358Z" fill="#f2f2f2"/>
<path d="M404,316 L404,360 L414,372" stroke="#111" stroke-width="2" fill="none"/>
<circle cx="419" cy="328" r="9" fill="#f4f4f4" stroke="#111" stroke-width="2.2"/>
<path d="M405,356 Q415,352 425,356 M408,364 Q417,362 425,366" stroke="#111" stroke-width="1.6" fill="none"/>
<path d="M387,370 L425,366 L425,467 L388,467Z" fill="#e68d6f"/>
<path d="M403,368 L425,366 L425,385 Q412,380 403,368Z" fill="#d98a78"/>
<defs><clipPath id="sp"><rect x="387.5" y="366" width="40" height="101"/></clipPath></defs>
<g clip-path="url(#sp)"><path d="M384,414 Q400,438 425,442" stroke="#62e27a" stroke-width="6" fill="none"/>
<path d="M400,437 Q413,448 425,452" stroke="#5ed072" stroke-width="5" fill="none"/></g>
<rect x="379" y="383.3" width="46" height="1.3" fill="#e04858"/>
<path d="M389,467 L425,467 L425,495 L390,505Z" fill="#7a7a7a"/>
<path d="M391,505 L425,492 L425,514 L391,514Z" fill="#f4f4f4"/>
<rect x="401" y="502" width="4" height="12" fill="#3a3a3a"/>
</svg>
<div class="a" style="left:425px;top:76px;width:327px;height:508px;border-radius:4px 4px 2px 2px;overflow:hidden;background:#5d5d5d;box-shadow:0 3px 5px rgba(0,0,0,.55)">
<div class="a" style="left:0;top:0;width:327px;height:14px;background:linear-gradient(#ececec,#d6d6d6);border-bottom:1px solid #b0b0b0"></div>
<div class="a" style="left:4px;top:3px;width:8px;height:8px;border-radius:50%;background:#fc5b57"></div>
<div class="a" style="left:17px;top:3px;width:8px;height:8px;border-radius:50%;background:#e5bb2e"></div>
<div class="a" style="left:29px;top:3px;width:8px;height:8px;border-radius:50%;background:#3ec84a"></div>
<div class="t" style="left:0;top:3px;width:327px;text-align:center;font-size:8px;color:#3a3a3a">2_pouin.swf</div>
</div>
<svg style="left:425px;top:90px;overflow:hidden" width="327" height="494" viewBox="425 90 327 494">
<!-- legs / robe -->
<rect x="512" y="478" width="154" height="107" fill="#f6f6f6"/>
<rect x="535" y="520" width="8" height="65" fill="#5d5d5d"/>
<rect x="633" y="478" width="10.5" height="107" fill="#5d5d5d"/>
<rect x="512.5" y="540" width="2.5" height="45" fill="#111"/>
<rect x="532.6" y="520" width="2.6" height="65" fill="#111"/>
<rect x="543" y="520" width="2.6" height="65" fill="#111"/>
<rect x="630.6" y="478" width="2.6" height="107" fill="#111"/>
<rect x="643.5" y="478" width="2.6" height="107" fill="#111"/>
<rect x="660.5" y="478" width="2.8" height="107" fill="#111"/>
<rect x="663.3" y="470" width="10" height="115" fill="#5d5d5d"/>
<defs><clipPath id="pc"><path d="M513,318 Q509,322 507,340 L505,394 L509,495 L666,478 L666.5,364 Q666,330 656,317 L630,300 L552,303 Z"/></clipPath></defs>
<!-- skirt -->
<path d="M509,492 Q590,484 666,475 L666,481 Q640,507 600,528 Q550,553 511,566 Z" fill="#2a1206"/>
<path d="M509,492 Q590,484 666,475 L666,482 Q600,494 510,504Z" fill="#5a1c0c" opacity=".6"/>
<g clip-path="url(#pc)">
<rect x="500" y="295" width="170" height="200" fill="#ef5019"/>
<path d="M566,442 Q615,440 666,378 L670,440 Q640,465 627,478 Q600,466 566,442Z" fill="#3a0606"/>
<path d="M627,478 L670,436 L670,480 Z" fill="#7c1a0a"/>
<path d="M536,440 Q590,468 630,478" stroke="#27a13c" stroke-width="9" fill="none"/>
<path d="M622,475 L670,430" stroke="#1b5e2a" stroke-width="8" fill="none"/>
<path d="M500,394 Q535,442 572,442 Q628,440 670,366" stroke="#3ef23e" stroke-width="10.5" fill="none"/>
<path d="M525,311 L552,300 L630,298 L670,316 Q640,360 617,379 L592,381 Q558,372 542,350 Q530,330 525,311Z" fill="#8c2914"/>
<path d="M600,336 L632,300 L670,316 Q645,350 617,377Z" fill="#7a2414"/>
<path d="M664,318 L612,373" stroke="#1c6a2c" stroke-width="9.5" fill="none"/>
<path d="M564,326 Q585,362 612,378" stroke="#40f040" stroke-width="10.5" fill="none"/>
</g>
<!-- neck -->
<path d="M547.7,298 L631,298 L630.5,309 Q615,330 588,336 Q563,330 547.7,305 Z" fill="#f6f6f6"/>
<!-- feather -->
<path d="M638,141 L641,112 Q642,104 652,104 L672,104 Q680,105 677,112 L657,142Z" fill="#ef5019"/>
<path d="M668,104 Q684,103 680,114 L662,143 L654,143 L674,112 Q676,106 668,104Z" fill="#1e140c"/>
<!-- hair top -->
<path d="M553,134 Q596,114 641,139 L641,143 Q596,126 553,138Z" fill="#111"/>
<!-- right hair -->
<path d="M648,186 L666,192 L676,230 L676,262 L670,285 L658,294 L660,240Z" fill="#6b2818"/>
<path d="M638,184 L650,186 L658,205 L663,245 L660,280 L650,296 L639,292Z" fill="#111"/>
<!-- left hair -->
<path d="M540,196 L518,203 L506,212 L519,212 Q508,228 502,250 L513,246 L502,261 L516,256 Q522,275 533,289 L541,292Z" fill="#111"/>
<!-- face -->
<path d="M539,199 L643,185 L643,287 Q626,300 613,313 Q600,323 589,323 Q565,316 546,289 L539,284Z" fill="#f8f8f8"/>
<path d="M539.5,214 L539.5,285 L545.6,289 Q560,313 586,316 Q612,314 626,297.6 L642,286" stroke="#111" stroke-width="3.2" fill="none"/>
<path d="M571,312.5 Q580,326 586,326 Q596,326 605,314.6" stroke="#111" stroke-width="3" fill="none"/>
<path d="M540,220 Q528,226 531,240 Q535,248 540,246" fill="#f8f8f8" stroke="#111" stroke-width="2"/>
<path d="M641,220 Q650,228 648,242 Q645,249 641,247" fill="#f8f8f8" stroke="#111" stroke-width="2"/>
<!-- hat band -->
<path d="M525,133 Q590,127 657,142 L657,150 L518,150Z" fill="#8c2612"/>
<path d="M518,148 Q580,140 657.5,143 L657.5,182 L592,183.5 L518,198Z" fill="#ef5019"/>
<!-- fringe under band -->
<path d="M518,198 L592,183.5 L585,194 Q560,200 540,206 L528,212 L508,212Z" fill="#111"/>
<path d="M585,195.5 L625,182.5 L635,183 L600,196Z" fill="#111"/>
<!-- eyebrows -->
<path d="M539,217 Q548,214 553,213 Q568,209 582,210 L582.5,214.5 Q566,214 553,217 Q546,218 539,219Z" fill="#111"/>
<path d="M597,207 Q612,203 625,203 Q636,204 641,209 L641,211.5 Q634,207.5 625,207.5 Q612,208 597.5,212Z" fill="#111"/>
<!-- bindi -->
<circle cx="589" cy="207" r="6.6" fill="#ee4a1c"/>
<!-- eyes -->
<ellipse cx="564" cy="229" rx="18" ry="13" fill="#f8f8f8" stroke="#111" stroke-width="3.2"/>
<path d="M545,231 Q547,247 564,247 Q581,247 583,231 Q580,243 564,243 Q548,243 545,231Z" fill="#111"/>
<ellipse cx="615" cy="229" rx="18" ry="13" fill="#f8f8f8" stroke="#111" stroke-width="3.2"/>
<path d="M596,231 Q598,247 615,247 Q632,247 634,231 Q631,243 615,243 Q599,243 596,231Z" fill="#111"/>
<!-- nose -->
<path d="M583,214 L587,293 L593.5,293 L595,214" stroke="#111" stroke-width="2.8" fill="none"/>
<path d="M582,271 Q578,276 583,281" stroke="#111" stroke-width="1.8" fill="none"/>
<!-- mustache / mouth -->
<path d="M548.8,287 Q567,279 586,283.5 L599,283 Q612,285 623,291" stroke="#111" stroke-width="3" fill="none"/>
<path d="M550,290 Q575,297 590,296.5 Q610,295 623,292" stroke="#111" stroke-width="3" fill="none"/>
</svg>
<svg style="left:902px;top:34px" width="13" height="10" viewBox="0 0 13 10"><ellipse cx="6.5" cy="5" rx="6" ry="4.5" fill="#d8d8d8"/><circle cx="4" cy="4" r="1.3" fill="#373737"/><circle cx="8" cy="3.5" r="1.3" fill="#373737"/><path d="M2 6h8" stroke="#373737"/></svg>
<svg style="left:902px;top:53px" width="12" height="10" viewBox="0 0 12 10"><rect x="0" y="0" width="12" height="10" fill="#d0d0d0"/><path d="M0 3h12M0 6h12M4 3v7M8 3v7" stroke="#373737" stroke-width=".9"/></svg>
<svg style="left:902px;top:78px" width="12" height="11" viewBox="0 0 12 11"><path d="M1 4h3l1-3v3h2v2H1z M0 7h12v4H0z" fill="#d0d0d0"/></svg>
<svg style="left:902px;top:94px" width="12" height="12" viewBox="0 0 12 12"><circle cx="6" cy="6" r="5.8" fill="#d8d8d8"/><path d="M6 2v2M6 5v5" stroke="#373737" stroke-width="1.6"/></svg>
<svg style="left:902px;top:112px" width="12" height="12" viewBox="0 0 12 12"><rect x="2" y="2" width="8" height="8" stroke="#d8d8d8" stroke-width="1.4" fill="none" stroke-dasharray="2 1.2"/><circle cx="6" cy="6" r="2.2" stroke="#d8d8d8" fill="none"/></svg>
<div class="a" style="left:922px;top:17px;width:278px;height:6px;background:#2c2c2c;"></div>
<div class="a" style="left:922px;top:23px;width:278px;height:14px;background:#353535;"></div>
<div class="a" style="left:963px;top:23px;width:50px;height:14px;background:#393939;"></div>
<div class="a" style="left:922px;top:36.5px;width:278px;height:1px;background:#2e2e2e;"></div>
<div class="t" style="left:926px;top:26px;font-size:7.2px;color:#9a9a9a;">Propriétés</div>
<div class="t" style="left:967px;top:26px;font-size:7.2px;color:#e6e6e6;font-weight:bold">Bibliothèque</div>
<div class="t" style="left:1017px;top:26px;font-size:7.2px;color:#b8b8b8;">Composants</div>
<div class="t" style="left:1066px;top:26px;font-size:7.2px;color:#b8b8b8;">Bibliothèques CC</div>
<div class="t" style="left:1190px;top:17px;font-size:6px;color:#777;">&#187;</div>
<div class="a" style="left:922px;top:37.5px;width:278px;height:102.5px;background:#383838;"></div>
<div class="t" style="left:928px;top:41px;font-size:7.5px;color:#c8c8c8;">2_pouin.fla</div>
<div class="t" style="left:1156px;top:40px;font-size:7px;color:#bbb;">&#8964;</div>
<svg style="left:1167px;top:42px" width="13" height="6" viewBox="0 0 13 6"><path d="M0 3h6 M5 0.5q8 0 8 2.5t-8 2.5z" fill="#ddd" stroke="#ddd"/></svg>
<svg style="left:1186px;top:40px" width="10" height="12" viewBox="0 0 10 12"><rect x="0.5" y="0.5" width="6" height="8" stroke="#ccc" fill="none"/><rect x="3.5" y="3.5" width="6" height="8" stroke="#ccc" fill="#353535"/></svg>
<div class="a" style="left:922px;top:140px;width:278px;height:16px;background:#343434;"></div>
<div class="t" style="left:924px;top:145px;font-size:6.5px;color:#6a6a6a;">50 éléments</div>
<svg style="left:1028px;top:144px" width="9" height="9" viewBox="0 0 9 9"><circle cx="5" cy="4" r="3" stroke="#ddd" stroke-width="1.4" fill="none"/><path d="M3 6L0 9" stroke="#ddd" stroke-width="1.6"/></svg>
<div class="a" style="left:1045px;top:142px;width:155px;height:12px;background:#3a3a3a;"></div>
<div class="a" style="left:922px;top:156px;width:278px;height:12px;background:#363636;"></div>
<div class="t" style="left:925px;top:158px;font-size:7.2px;color:#a8a8a8;">Nom &#8593;</div>
<div class="t" style="left:1070px;top:158px;font-size:7px;color:#a8a8a8;">Liaison</div>
<div class="t" style="left:1115px;top:158px;font-size:7px;color:#a8a8a8;">Nombre d</div>
<div class="t" style="left:1159px;top:158px;font-size:7px;color:#a8a8a8;">Date de ..</div>
<div class="a" style="left:1065px;top:167px;width:40px;height:1px;background:#444;"></div>
<div class="a" style="left:922px;top:168px;width:278px;height:160px;background:#363636;"></div>
<svg style="left:937px;top:171.0px" width="11" height="9" viewBox="0 0 11 9"><path d="M0 3h3l4-3v9L3 6H0z" fill="#d8d8d8"/><path d="M8 2q2 2.5 0 5M9.5 1q3 3.5 0 7" stroke="#d8d8d8" fill="none"/></svg>
<div class="t" style="left:951px;top:172.0px;font-size:7px;color:#a8a8a8;letter-spacing:.35px">2_pouin_a.mp3</div>
<div class="t" style="left:1116px;top:172.0px;font-size:7px;color:#b8b8b8;">2</div>
<div class="t" style="left:1159px;top:172.0px;font-size:7px;color:#b8b8b8;letter-spacing:.3px">28/07/2..</div>
<svg style="left:937px;top:182.9px" width="11" height="9" viewBox="0 0 11 9"><path d="M0 3h3l4-3v9L3 6H0z" fill="#d8d8d8"/><path d="M8 2q2 2.5 0 5M9.5 1q3 3.5 0 7" stroke="#d8d8d8" fill="none"/></svg>
<div class="t" style="left:951px;top:183.9px;font-size:7px;color:#a8a8a8;letter-spacing:.35px">2_pouin_b.mp3</div>
<div class="t" style="left:1116px;top:183.9px;font-size:7px;color:#b8b8b8;">0</div>
<div class="t" style="left:1159px;top:183.9px;font-size:7px;color:#b8b8b8;letter-spacing:.3px">16/03/2..</div>
<svg style="left:937px;top:193.9px" width="11" height="10" viewBox="0 0 11 10"><path d="M0 10V2h2v6h4l4-4v6z" fill="#d8d8d8"/><path d="M5 1q4 0 4 4" stroke="#d8d8d8" fill="none"/></svg>
<div class="t" style="left:951px;top:195.9px;font-size:7px;color:#a8a8a8;letter-spacing:.35px">limiter</div>
<div class="t" style="left:1116px;top:195.9px;font-size:7px;color:#b8b8b8;">1</div>
<div class="t" style="left:1159px;top:195.9px;font-size:7px;color:#b8b8b8;letter-spacing:.3px">20/05/2</div>
<svg style="left:937px;top:205.8px" width="11" height="10" viewBox="0 0 11 10"><path d="M1 5l4-4 5 4v5H1z" fill="#d0d0d0"/><circle cx="5" cy="6" r="2" fill="#363636"/></svg>
<div class="t" style="left:951px;top:207.8px;font-size:7px;color:#a8a8a8;letter-spacing:.35px">picked-eyebrow</div>
<div class="t" style="left:1116px;top:207.8px;font-size:7px;color:#b8b8b8;">25</div>
<div class="t" style="left:1159px;top:207.8px;font-size:7px;color:#b8b8b8;letter-spacing:.3px">08/07/2</div>
<svg style="left:937px;top:217.7px" width="11" height="10" viewBox="0 0 11 10"><path d="M1 5l4-4 5 4v5H1z" fill="#d0d0d0"/><circle cx="5" cy="6" r="2" fill="#363636"/></svg>
<div class="t" style="left:951px;top:219.7px;font-size:7px;color:#a8a8a8;letter-spacing:.35px">picked-eyes</div>
<div class="t" style="left:1116px;top:219.7px;font-size:7px;color:#b8b8b8;">59</div>
<div class="t" style="left:1159px;top:219.7px;font-size:7px;color:#b8b8b8;letter-spacing:.3px">08/02/2..</div>
<svg style="left:937px;top:229.7px" width="11" height="10" viewBox="0 0 11 10"><path d="M0 10V2h2v6h4l4-4v6z" fill="#d8d8d8"/><path d="M5 1q4 0 4 4" stroke="#d8d8d8" fill="none"/></svg>
<div class="t" style="left:951px;top:231.7px;font-size:7px;color:#a8a8a8;letter-spacing:.35px">polo-pouin</div>
<div class="t" style="left:1116px;top:231.7px;font-size:7px;color:#b8b8b8;">1</div>
<div class="t" style="left:1159px;top:231.7px;font-size:7px;color:#b8b8b8;letter-spacing:.3px">30/05/2..</div>
<svg style="left:937px;top:241.6px" width="11" height="10" viewBox="0 0 11 10"><path d="M0 10V2h2v6h4l4-4v6z" fill="#d8d8d8"/><path d="M5 1q4 0 4 4" stroke="#d8d8d8" fill="none"/></svg>
<div class="t" style="left:951px;top:243.6px;font-size:7px;color:#a8a8a8;letter-spacing:.35px">polo-pouin-chapeau</div>
<div class="t" style="left:1116px;top:243.6px;font-size:7px;color:#b8b8b8;">1</div>
<div class="t" style="left:1159px;top:243.6px;font-size:7px;color:#b8b8b8;letter-spacing:.3px">29/05/2..</div>
<svg style="left:937px;top:253.5px" width="11" height="10" viewBox="0 0 11 10"><path d="M0 10V2h2v6h4l4-4v6z" fill="#d8d8d8"/><path d="M5 1q4 0 4 4" stroke="#d8d8d8" fill="none"/></svg>
<div class="t" style="left:951px;top:255.5px;font-size:7px;color:#a8a8a8;letter-spacing:.35px">polo-pouin-costume</div>
<div class="t" style="left:1116px;top:255.5px;font-size:7px;color:#b8b8b8;">1</div>
<div class="t" style="left:1159px;top:255.5px;font-size:7px;color:#b8b8b8;letter-spacing:.3px">29/05/2..</div>
<svg style="left:937px;top:265.4px" width="11" height="10" viewBox="0 0 11 10"><path d="M0 10V2h2v6h4l4-4v6z" fill="#d8d8d8"/><path d="M5 1q4 0 4 4" stroke="#d8d8d8" fill="none"/></svg>
<div class="t" style="left:951px;top:267.4px;font-size:7px;color:#a8a8a8;letter-spacing:.35px">polo-pouin-tete</div>
<div class="t" style="left:1116px;top:267.4px;font-size:7px;color:#b8b8b8;">21</div>
<div class="t" style="left:1159px;top:267.4px;font-size:7px;color:#b8b8b8;letter-spacing:.3px">01/08/2..</div>
<svg style="left:937px;top:277.4px" width="11" height="10" viewBox="0 0 11 10"><path d="M0 10V2h2v6h4l4-4v6z" fill="#d8d8d8"/><path d="M5 1q4 0 4 4" stroke="#d8d8d8" fill="none"/></svg>
<div class="t" style="left:951px;top:279.4px;font-size:7px;color:#a8a8a8;letter-spacing:.35px">tete-normale</div>
<div class="t" style="left:1116px;top:279.4px;font-size:7px;color:#b8b8b8;">1</div>
<div class="t" style="left:1159px;top:279.4px;font-size:7px;color:#b8b8b8;letter-spacing:.3px">30/05/2..</div>
<div class="a" style="left:922px;top:328px;width:278px;height:4px;background:#333;"></div>
<svg style="left:923px;top:334px" width="7" height="7" viewBox="0 0 7 7"><path d="M0 0h7v7H0z" fill="#d0d0d0"/><path d="M0 0h3v3H0z" fill="#353535"/></svg>
<svg style="left:934px;top:334px" width="8" height="7" viewBox="0 0 8 7"><path d="M0 1h3l1 1h4v5H0z" fill="#d0d0d0"/></svg>
<svg style="left:944px;top:333px" width="8" height="8" viewBox="0 0 8 8"><circle cx="4" cy="4" r="3.8" fill="#d8d8d8"/><path d="M4 1.5v2.5l1.5 1.5" stroke="#353535"/></svg>
<svg style="left:956px;top:333px" width="6" height="8" viewBox="0 0 6 8"><path d="M1 2h4v6H1z M0 1h6v1H0z" fill="#8a8a8a"/></svg>
<div class="a" style="left:995px;top:332px;width:205px;height:18px;background:#2d2d2d;filter:blur(2px)"></div>
<div class="t" style="left:926px;top:345px;font-size:7.5px;color:#e0e0e0;">Sélecteur d'image</div>
<div class="a" style="left:922px;top:356px;width:278px;height:303px;background:#383838;"></div>
<div class="a" style="left:922px;top:356px;width:278px;height:1px;background:#2c2c2c;"></div>
<div class="a" style="left:925px;top:361px;width:10px;height:6px;background:#555;opacity:.5"></div>
<div class="a" style="left:938px;top:362px;width:80px;height:4px;background:#4a4a4a;opacity:.5"></div>
<div class="a" style="left:1010px;top:362px;width:160px;height:4px;background:#404040;opacity:.5"></div>
<div class="t" style="left:1176px;top:359px;font-size:8px;color:#666;">&#8250;</div>
<div class="a" style="left:1190px;top:359px;width:8px;height:8px;background:#454545;"></div>
<div class="t" style="left:996px;top:400px;font-size:6.5px;color:#555;">Aucun symbole d'animation sélectionné</div>
<div class="a" style="left:930px;top:646px;width:12px;height:12px;background:#4a4a4a;border-radius:50%"></div>
<div class="a" style="left:946px;top:648px;width:4px;height:8px;background:#555;"></div>
<div class="a" style="left:953px;top:650px;width:55px;height:5px;background:#444;opacity:.6"></div>
<div class="a" style="left:1040px;top:652px;width:8px;height:1px;background:#555;"></div>
<div class="a" style="left:1115px;top:647px;width:3px;height:8px;background:#555;"></div>
<div class="a" style="left:1188px;top:651px;width:8px;height:2px;background:#555;"></div>
<svg style="left:345px;top:344px" width="8" height="12" viewBox="0 0 8 12"><path d="M0.5 0.5L0.5 10 3 7.5 5 11.5 6.5 10.8 4.5 7 7.5 7Z" fill="#1a1a1a" stroke="#8a8a8a" stroke-width=".8"/></svg>
</div></body></html>
